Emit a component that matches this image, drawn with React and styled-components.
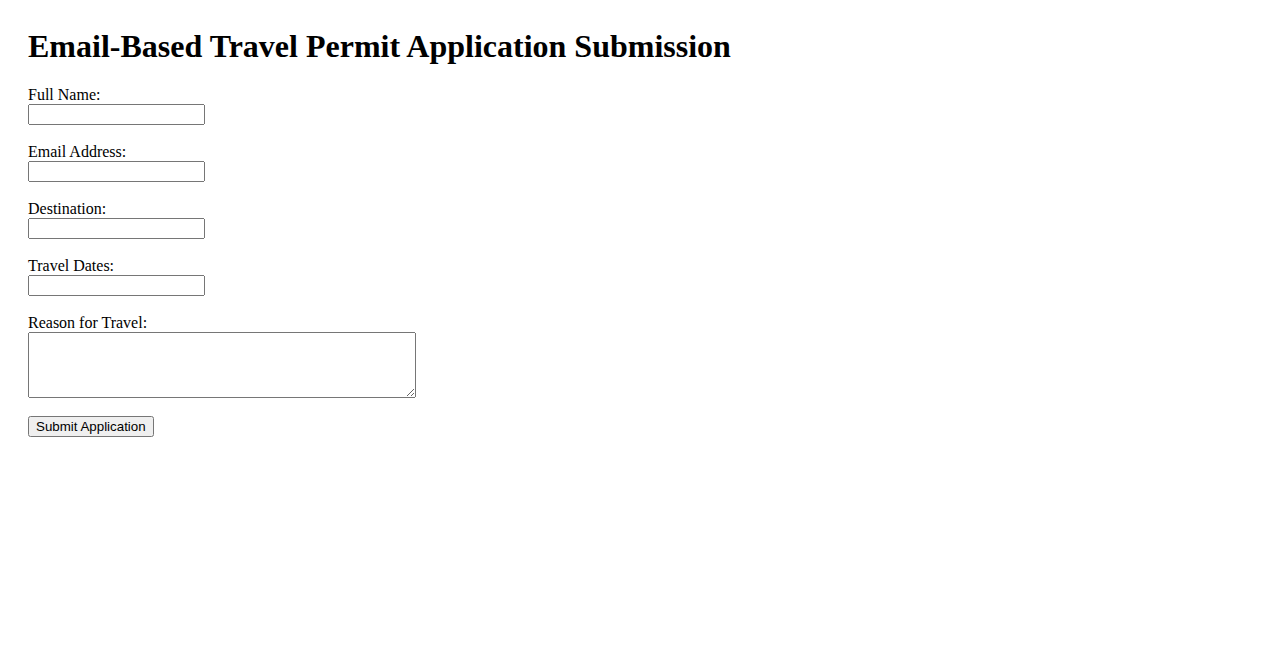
import React from 'react';
import styled, { createGlobalStyle } from 'styled-components';

export default function App() {
  return (
    <>
      <GlobalStyle />
      <Page>
        <Title>Email-Based Travel Permit Application Submission</Title>
        <form onSubmit={(e) => e.preventDefault()}>
          <Field>
            <Label htmlFor='name'>Full Name:</Label>
            <TextInput id='name' type='text' />
          </Field>
          <Field>
            <Label htmlFor='email'>Email Address:</Label>
            <TextInput id='email' type='email' />
          </Field>
          <Field>
            <Label htmlFor='destination'>Destination:</Label>
            <TextInput id='destination' type='text' />
          </Field>
          <Field>
            <Label htmlFor='dates'>Travel Dates:</Label>
            <TextInput id='dates' type='text' />
          </Field>
          <Field>
            <Label htmlFor='reason'>Reason for Travel:</Label>
            <Reason id='reason' />
          </Field>
          <SubmitButton type='submit'>Submit Application</SubmitButton>
        </form>
      </Page>
    </>
  );
}

/// styled components:

const GlobalStyle = createGlobalStyle`
  body {
    margin: 8px;
    background: #fff;
    color: #000;
    font-family: 'Liberation Serif', 'Times New Roman', serif;
  }
`;

const Page = styled.div`
  padding: 20px;
`;

const Title = styled.h1`
  margin: 0 0 21px;
  font-size: 32px;
  font-weight: bold;
  line-height: normal;
`;

const Field = styled.div`
  display: flex;
  flex-direction: column;
  align-items: flex-start;
  margin-bottom: 18px;
`;

const Label = styled.label`
  font-size: 16px;
  line-height: 18px;
`;

const TextInput = styled.input`
  box-sizing: border-box;
  width: 177px;
  height: 21px;
  margin: 0;
  font-family: 'Liberation Sans', Arial, sans-serif;
  font-size: 13.333px;
`;

const Reason = styled.textarea`
  box-sizing: border-box;
  width: 388px;
  height: 66px;
  margin: 0;
  font-family: 'Liberation Mono', monospace;
  font-size: 13.333px;
`;

const SubmitButton = styled.button`
  box-sizing: border-box;
  height: 21px;
  margin: 0;
  font-family: 'Liberation Sans', Arial, sans-serif;
  font-size: 13.333px;
`;
